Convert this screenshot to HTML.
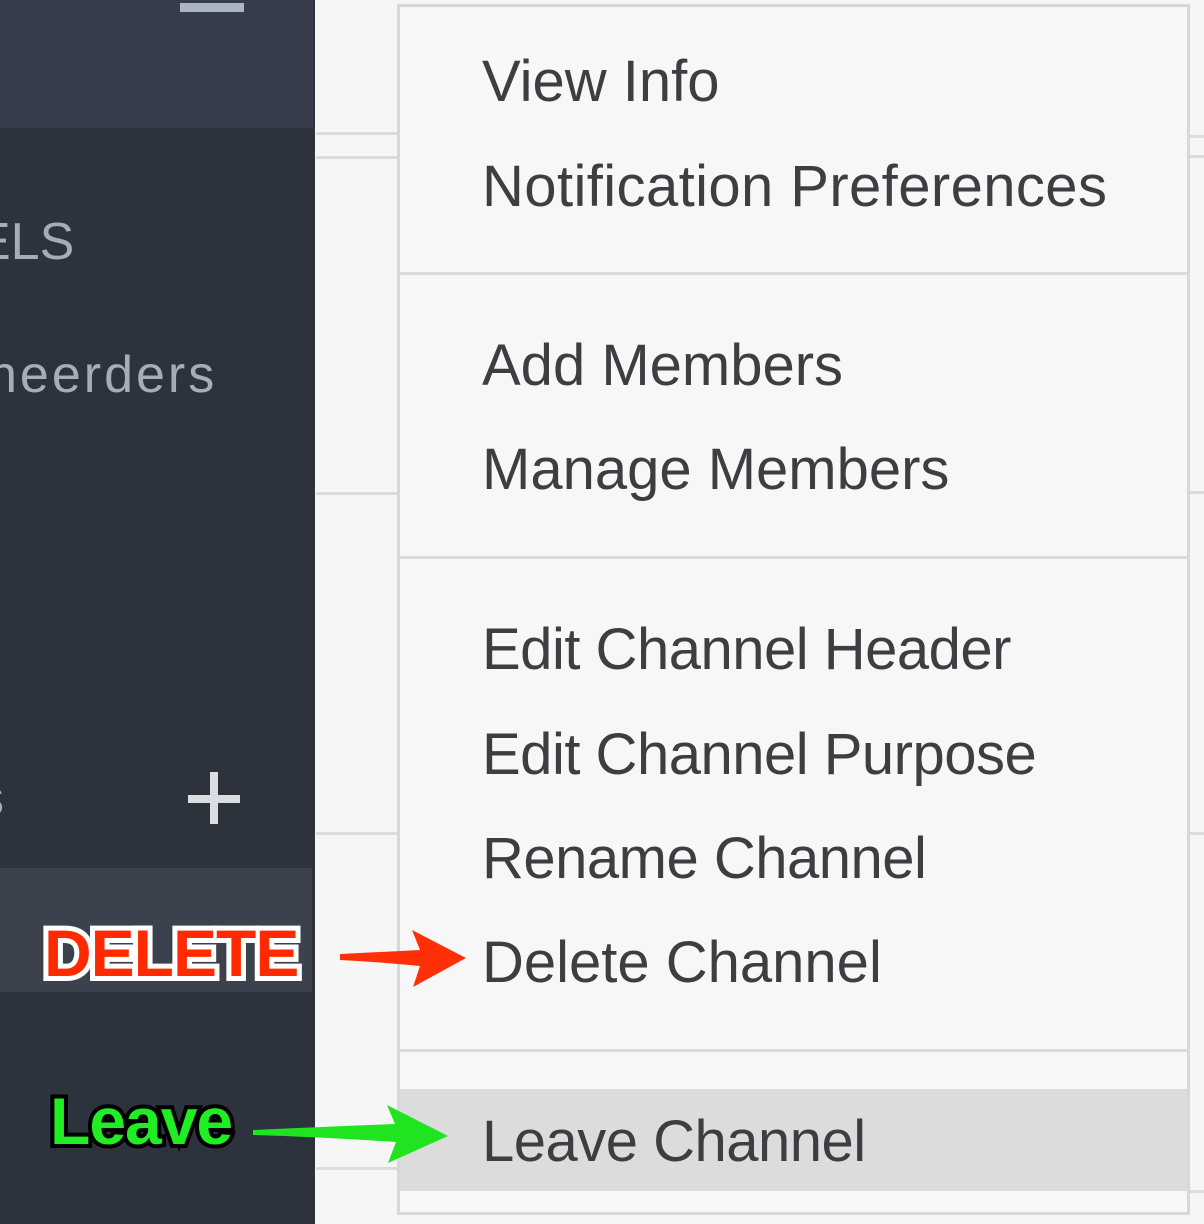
<!DOCTYPE html>
<html><head><meta charset="utf-8"><style>
*{margin:0;padding:0;box-sizing:border-box}
body{width:1204px;height:1224px;position:relative;overflow:hidden;background:#f7f6f7;font-family:"Liberation Sans",sans-serif}
.abs{position:absolute}
.side{left:0;top:0;width:315px;height:1224px;background:#2d333d}
.hl{height:3px;background:#dcdcde}
.mi{position:absolute;left:482px;font-size:58px;line-height:104px;color:#3d3d42;letter-spacing:0;white-space:nowrap}
.st{color:#a7adb8;font-size:52px;white-space:nowrap}
</style></head><body>
<div class="abs side"></div>
<div class="abs" style="left:0;top:0;width:313px;height:128px;background:#363c49"></div>
<div class="abs" style="left:180px;top:3px;width:64px;height:9px;background:#a9b4c4"></div>
<div class="abs" style="left:0;top:868px;width:312px;height:124px;background:#3b414d"></div>
<div class="abs st" style="left:-24px;top:212px;line-height:60px">ELS</div>
<div class="abs st" style="left:-12px;top:345px;line-height:60px;letter-spacing:3px">neerders</div>
<div class="abs st" style="left:-22px;top:768px;line-height:60px">s</div>
<div class="abs" style="left:188px;top:795px;width:52px;height:8px;background:#dcdde0"></div>
<div class="abs" style="left:210px;top:772px;width:8px;height:52px;background:#dcdde0"></div>

<div class="abs hl" style="left:316px;top:132px;width:82px"></div>
<div class="abs hl" style="left:316px;top:156px;width:82px"></div>
<div class="abs hl" style="left:316px;top:492px;width:82px"></div>
<div class="abs hl" style="left:316px;top:832px;width:82px"></div>
<div class="abs hl" style="left:316px;top:1167px;width:82px"></div>
<div class="abs hl" style="left:1190px;top:135px;width:14px"></div>
<div class="abs hl" style="left:1190px;top:155px;width:14px"></div>
<div class="abs hl" style="left:1190px;top:491px;width:14px"></div>
<div class="abs hl" style="left:1190px;top:832px;width:14px"></div>
<div class="abs hl" style="left:1190px;top:1190px;width:14px"></div>

<div class="abs" style="left:397px;top:4px;width:793px;height:1211px;border:3px solid #d8d7da;background:#f8f7f8"></div>
<div class="abs hl" style="left:400px;top:272px;width:787px"></div>
<div class="abs hl" style="left:400px;top:556px;width:787px"></div>
<div class="abs hl" style="left:400px;top:1049px;width:787px"></div>
<div class="abs" style="left:400px;top:1089px;width:787px;height:102px;background:#dcdcdc"></div>

<div class="mi" style="top:30px">View Info</div>
<div class="mi" style="top:135px;letter-spacing:0.4px">Notification Preferences</div>
<div class="mi" style="top:314px">Add Members</div>
<div class="mi" style="top:418px">Manage Members</div>
<div class="mi" style="top:598px;letter-spacing:-0.5px">Edit Channel Header</div>
<div class="mi" style="top:703px;letter-spacing:-0.5px">Edit Channel Purpose</div>
<div class="mi" style="top:807px;letter-spacing:-0.5px">Rename Channel</div>
<div class="mi" style="top:911px">Delete Channel</div>
<div class="mi" style="top:1090px;letter-spacing:-0.5px">Leave Channel</div>

<div class="abs" style="left:44px;top:916px;font-size:66px;font-weight:bold;line-height:74px;color:#ff2a00;-webkit-text-stroke:10px #fff;paint-order:stroke fill;letter-spacing:-1px">DELETE</div>
<div class="abs" style="left:50px;top:1084px;font-size:66px;font-weight:bold;line-height:74px;color:#1fee22;-webkit-text-stroke:8px #000;paint-order:stroke fill;letter-spacing:-1px">Leave</div>

<svg class="abs" style="left:0;top:0" width="1204" height="1224">
<path d="M340 954 Q380 952 420 950 L412 930 L466 958 L413 987 L420 966 Q380 962 340 960 Z" fill="#ff3008"/>
<path d="M253 1130 Q320 1127 395 1124 L387 1105 L448 1136 L388 1163 L396 1142 Q320 1137 253 1135 Z" fill="#1fe41f"/>
</svg>
</body></html>
